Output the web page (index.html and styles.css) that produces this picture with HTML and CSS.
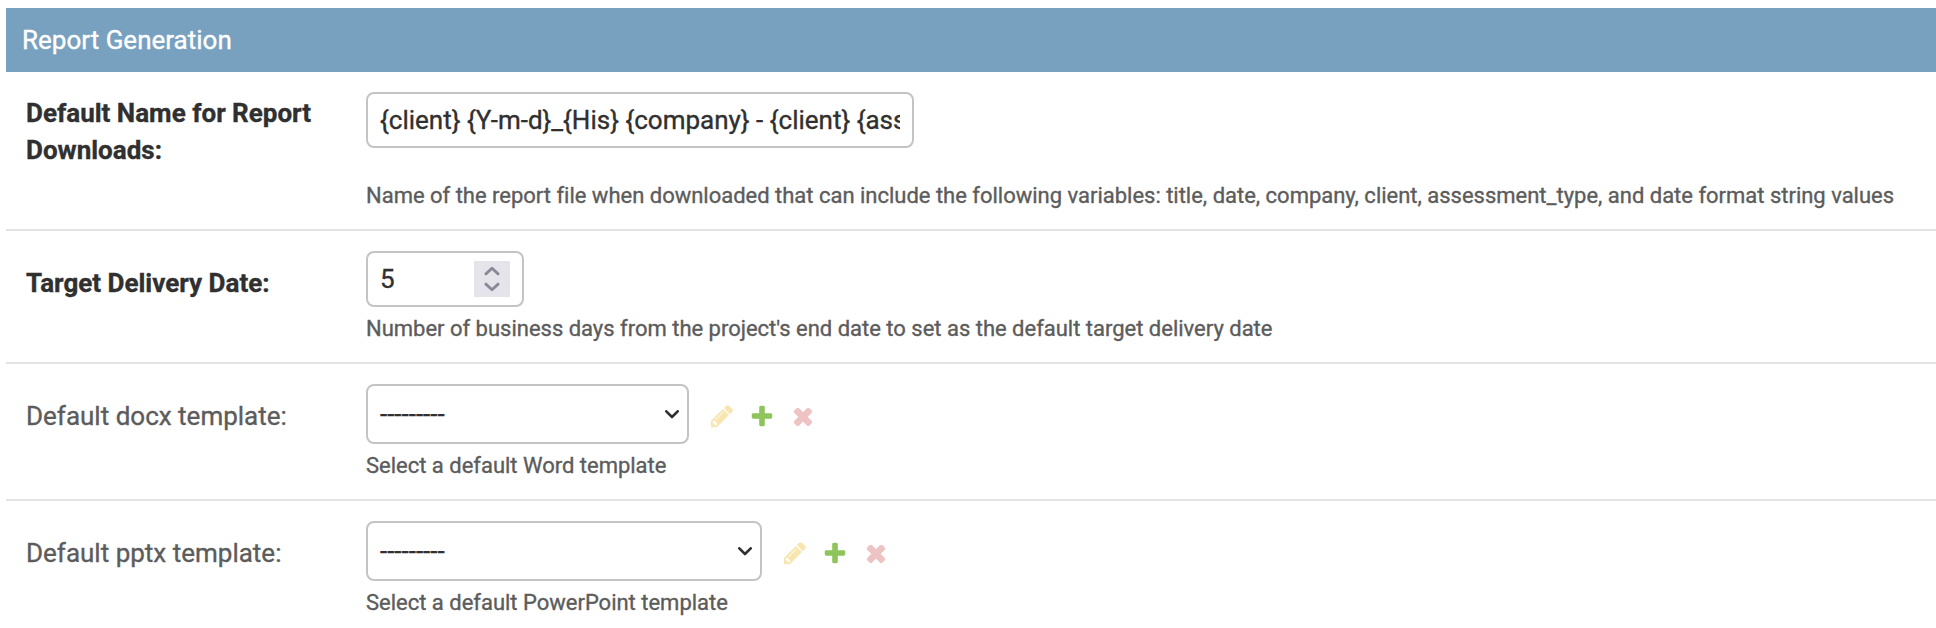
FILE: index.html
```html
<!DOCTYPE html>
<html lang="en">
<head>
<meta charset="utf-8">
<title>Report Generation</title>
<link rel="stylesheet" href="styles.css">
</head>
<body>
<svg class="defs" width="0" height="0" aria-hidden="true">
  <symbol id="pencil" viewBox="0 0 1792 1792"><path d="M491 1536l91-91-235-235-91 91v107h128v128h107zm523-928q0-22-22-22-10 0-17 7l-542 542q-7 7-7 17 0 22 22 22 10 0 17-7l542-542q7-7 7-17zm-54-192l416 416-832 832h-416v-416zm683 96q0 53-37 90l-166 166-416-416 166-165q36-38 90-38 53 0 91 38l235 234q37 39 37 91z"/></symbol>
  <symbol id="plus" viewBox="0 0 1792 1792"><path d="M1600 796v192q0 40-28 68t-68 28h-416v416q0 40-28 68t-68 28h-192q-40 0-68-28t-28-68v-416h-416q-40 0-68-28t-28-68v-192q0-40 28-68t68-28h416v-416q0-40 28-68t68-28h192q40 0 68 28t28 68v416h416q40 0 68 28t28 68z"/></symbol>
  <symbol id="cross" viewBox="0 0 1792 1792"><path d="M1490 1322q0 40-28 68l-136 136q-28 28-68 28t-68-28l-294-294-294 294q-28 28-68 28t-68-28l-136-136q-28-28-28-68t28-68l294-294-294-294q-28-28-28-68t28-68l136-136q28-28 68-28t68 28l294 294 294-294q28-28 68-28t68 28l136 136q28 28 28 68t-28 68l-294 294 294 294q28 28 28 68z"/></symbol>
  <symbol id="chevron" viewBox="0 0 14 9"><path class="stroke" d="M1.3 1.3 7 7l5.700-5.700"/></symbol>
</svg>
<main class="module">
  <h2 class="module-title">Report Generation</h2>
  <section class="row row-name">
    <label class="label required label-double" for="report-name">Default Name for Report<br>Downloads:</label>
    <div class="field">
      <input class="control text-input" id="report-name" type="text" value="{client} {Y-m-d}_{His} {company} - {client} {assessment_type}">
      <p class="help help-spaced">Name of the report file when downloaded that can include the following variables: title, date, company, client, assessment_type, and date format string values</p>
    </div>
  </section>
  <section class="row row-date">
    <label class="label required label-single">Target Delivery Date:</label>
    <div class="field">
      <div class="control number-input"><span>5</span>
        <span class="spinner"><svg viewBox="0 0 36 36"><path d="M11.900 12.900 18 7.300l6.100 5.600M11.900 23.100 18 28.700l6.100-5.600"/></svg></span>
      </div>
      <p class="help">Number of business days from the project's end date to set as the default target delivery date</p>
    </div>
  </section>
  <section class="row row-template">
    <label class="label label-single">Default docx template:</label>
    <div class="field">
      <div class="related">
        <div class="control select select-docx"><span class="dashes">---------</span><svg class="chevron"><use href="#chevron"/></svg></div>
        <div class="actions"><svg class="icon edit"><use href="#pencil"/></svg><svg class="icon add"><use href="#plus"/></svg><svg class="icon remove"><use href="#cross"/></svg></div>
      </div>
      <p class="help">Select a default Word template</p>
    </div>
  </section>
  <section class="row row-template last">
    <label class="label label-single">Default pptx template:</label>
    <div class="field">
      <div class="related">
        <div class="control select select-pptx"><span class="dashes">---------</span><svg class="chevron"><use href="#chevron"/></svg></div>
        <div class="actions"><svg class="icon edit"><use href="#pencil"/></svg><svg class="icon add"><use href="#plus"/></svg><svg class="icon remove"><use href="#cross"/></svg></div>
      </div>
      <p class="help">Select a default PowerPoint template</p>
    </div>
  </section>
</main>
</body>
</html>
```
FILE: styles.css
```css
* { box-sizing: border-box; }
body {
  margin: 0;
  background: #fff;
  color: #303030;
  font-family: Roboto, "Liberation Sans", sans-serif;
  -webkit-text-stroke: .35px currentColor;
  overflow: hidden;
}
.defs { display: block; }
.module { padding: 8px 0 0 6px; }
.module-title {
  display: flex;
  height: 64px;
  margin: 0;
  padding: 16px;
  background: #78a1c0;
  color: #fff;
  font-size: 26px;
  font-weight: 400;
  line-height: 32px;
}
.row {
  display: flex;
  padding: 20px 0 0 20px;
  border-bottom: 2px solid #e3e3e3;
}
.row-name { height: 159px; }
.row-date { height: 133px; }
.row-template { height: 137px; }
.last { border-bottom: 0; }
.label {
  width: 340px;
  flex: none;
  color: #5c5c5c;
  font-size: 26px;
  line-height: 37px;
  white-space: nowrap;
}
.label-double { padding-top: 3px; }
.label-single { padding-top: 14px; }
.required { color: #303030; font-weight: 700; }
.field { flex: none; }
.control {
  display: flex;
  align-items: center;
  justify-content: space-between;
  height: 56px;
  padding: 0 12px;
  border: 2px solid #c4c4c4;
  border-radius: 8px;
  background: #fff;
  color: #303030;
  font-size: 26px;
  line-height: 32px;
}
.text-input {
  display: block;
  width: 548px;
  font-family: inherit;
  -webkit-text-stroke: inherit;
}
.number-input { width: 158px; }
.spinner { width: 36px; height: 36px; background: #e4e4ea; }
.spinner svg {
  display: block;
  fill: none;
  stroke: #888896;
  stroke-width: 2.800;
  stroke-linecap: round;
  stroke-linejoin: round;
}
.related { display: flex; }
.select { height: 60px; padding-right: 8px; }
.select-docx { width: 323px; }
.select-pptx { width: 396px; }
.chevron { width: 14px; height: 9px; }
.stroke {
  fill: none;
  stroke: #303030;
  stroke-width: 2.600;
  stroke-linecap: round;
  stroke-linejoin: round;
}
.actions { display: flex; gap: 14.500px; padding: 19px 0 0 19.500px; }
.icon { width: 26px; height: 26px; }
.edit { fill: #f8e6b0; }
.add { fill: #8fc35b; }
.remove { fill: #eec3c3; stroke: #eec3c3; stroke-width: 70; }
.help {
  margin: 7px 0 0;
  color: #5c5c5c;
  font-size: 22px;
  letter-spacing: -.01px;
  line-height: 30px;
  white-space: nowrap;
}
.help-spaced { margin-top: 33px; }
```
